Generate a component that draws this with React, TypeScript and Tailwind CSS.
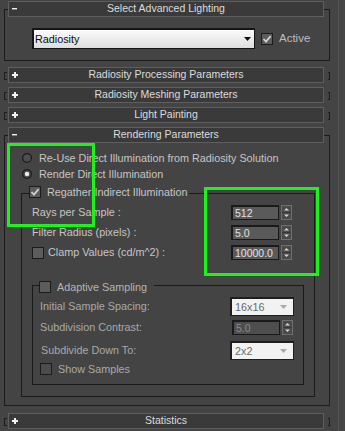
import React from 'react';

const Header = ({ title, open }: { title: string; open?: boolean }) => (
  <div className="relative h-[16px] w-[316px] ml-[3px] bg-[#3a3a3a] border border-[#5e5e5e] flex items-center justify-center text-[10.5px] text-[#dcdcdc]">
    <span className="absolute left-[3px] top-0 h-full flex items-center">
      {open ? (
        <svg width="5" height="2"><rect x="0" y="0" width="5" height="1.4" fill="#f0f0f0" /></svg>
      ) : (
        <svg width="6" height="6"><rect x="0" y="2" width="6" height="2" fill="#f4f4f4" /><rect x="2" y="0" width="2" height="6" fill="#f4f4f4" /></svg>
      )}
    </span>
    <span className="leading-none -mt-[1px]">{title}</span>
  </div>
);

const Collapsed = ({ title, className = '' }: { title: string; className?: string }) => (
  <div className={`flex h-[16px] ${className}`}>
    <div className="w-[3px] h-[8px] mt-[5px] border-l border-y border-[#1c1c1c]" />
    <div className="-ml-[2px]">
      <Header title={title} />
    </div>
    <div className="w-[2px] h-[8px] mt-[5px] ml-[4px] border-r border-y border-[#1c1c1c]" />
  </div>
);

const Check = ({ checked, dim }: { checked?: boolean; dim?: boolean }) => (
  <div className={`w-[12px] h-[12px] shrink-0 border border-[#1c1c1c] ${dim ? 'bg-[#4c4c4c]' : 'bg-[#5c5c5c]'} flex items-center justify-center`}>
    {checked && (
      <svg width="10" height="10" viewBox="0 0 10 10">
        <path d="M1.5 5 L4 7.6 L8.6 2.2" stroke="#cfcfcf" strokeWidth="1.8" fill="none" />
      </svg>
    )}
  </div>
);

const Radio = ({ on }: { on?: boolean }) => (
  <svg width="10" height="10" viewBox="0 0 10 10" className="shrink-0">
    <circle cx="5" cy="5" r="4.4" fill="#4d4d4d" stroke="#1a1a1a" strokeWidth="1.2" />
    {on && <circle cx="5" cy="5" r="2.2" fill="#ececec" />}
  </svg>
);

const SpinBtn = () => (
  <svg width="11" height="15" viewBox="0 0 11 15" className="shrink-0">
    <rect x="0.5" y="0.5" width="10" height="14" fill="#4a4a4a" stroke="#707070" />
    <line x1="1" y1="7.5" x2="10" y2="7.5" stroke="#383838" />
    <path d="M3 5.5 L5.5 3 L8 5.5 Z" fill="#d6d6d6" />
    <path d="M3 9.5 L5.5 12 L8 9.5 Z" fill="#d6d6d6" />
  </svg>
);

const Spinner = ({ value, dim }: { value: string; dim?: boolean }) => (
  <div className="flex items-center gap-[2px] shrink-0">
    <div className={`w-[48px] h-[15px] shrink-0 overflow-hidden border-l-2 border-t-2 border-r border-b border-[#1a1a1a] ${dim ? 'bg-[#4e4e4e] text-[#8c8c8c]' : 'bg-[#5a5a5a] text-[#e2e2e2]'} pl-[2px] flex items-center text-[10.5px] leading-none whitespace-nowrap`}>
      {value}
    </div>
    <SpinBtn />
  </div>
);

const Drop = ({ value }: { value: string }) => (
  <div className="w-[64px] h-[19px] shrink-0 bg-[#f2f2f2] border-l-2 border-t-2 border-r border-b border-[#1e1e1e] flex items-center justify-between pl-[3px] pr-[6px] text-[10.8px] text-[#6a6a6a] leading-none">
    <span>{value}</span>
    <svg width="7" height="4"><path d="M0 0 L7 0 L3.5 4 Z" fill="#a9a9a9" /></svg>
  </div>
);

export default function App() {
  return (
    <div className="relative w-[345px] h-[431px] overflow-hidden bg-[#444444] flex font-['Liberation_Sans',Arial,sans-serif] text-[10.8px] text-[#c6c6c6]">
      <div className="w-[338px] pl-[4px] pr-[8px] pt-[1px] flex flex-col">
        {/* Select Advanced Lighting */}
        <div className="pt-[8px]">
          <div className="border border-[#1c1c1c] flex flex-col">
            <div className="-mt-[9px]">
              <Header title="Select Advanced Lighting" open />
            </div>
            <div className="pt-[11px] pb-[11px] pl-[27px] flex items-center">
              <div className="w-[223px] h-[21px] border-l-2 border-t-2 border-r border-b border-[#151515] bg-gradient-to-b from-[#fbfbfb] to-[#dedede] flex items-center justify-between pl-[1px] pr-[3px] text-[#0c0c0c] leading-none">
                <span>Radiosity</span>
                <svg width="7" height="4"><path d="M0 0 L7 0 L3.5 4 Z" fill="#111" /></svg>
              </div>
              <div className="ml-[6px] flex items-center gap-[6px]">
                <Check checked />
                <span className="text-[11.5px] text-[#bdbdbd]">Active</span>
              </div>
            </div>
          </div>
        </div>

        <Collapsed title="Radiosity Processing Parameters" className="mt-[6px]" />
        <Collapsed title="Radiosity Meshing Parameters" className="mt-[4px]" />
        <Collapsed title="Light Painting" className="mt-[4px]" />

        {/* Rendering Parameters */}
        <div className="mt-[4px] pt-[8px]">
          <div className="border border-[#1c1c1c] flex flex-col pb-[8px]">
            <div className="-mt-[9px]">
              <Header title="Rendering Parameters" open />
            </div>
            <div className="mt-[7px] pl-[17px] h-[16px] flex items-center gap-[7px] whitespace-nowrap">
              <Radio />
              <span>Re-Use Direct Illumination from Radiosity Solution</span>
            </div>
            <div className="pl-[17px] h-[16px] flex items-center gap-[7px]">
              <Radio on />
              <span>Render Direct Illumination</span>
            </div>

            {/* Regather group */}
            <div className="mt-[11px] ml-[16px] mr-[14px] border border-[#1a1a1a] flex flex-col pb-[11px]">
              <div className="-mt-[8px] ml-[7px] self-start h-[12px] bg-[#444444] pr-[2px] flex items-center gap-[6px]">
                <Check checked />
                <span className="leading-none">Regather Indirect Illumination</span>
              </div>
              <div className="mt-[7px] pl-[10px] pr-[22px] h-[15px] flex items-center justify-between">
                <span>Rays per Sample :</span>
                <Spinner value="512" />
              </div>
              <div className="mt-[5px] pl-[10px] pr-[22px] h-[15px] flex items-center justify-between">
                <span>Filter Radius (pixels) :</span>
                <Spinner value="5.0" />
              </div>
              <div className="mt-[5px] pl-[10px] pr-[22px] h-[15px] flex items-center justify-between">
                <div className="flex items-center gap-[4px]">
                  <Check />
                  <span>Clamp Values (cd/m^2) :</span>
                </div>
                <Spinner value="10000.0" />
              </div>

              {/* Adaptive Sampling group */}
              <div className="mt-[25px] mx-[10px] border border-[#1a1a1a] flex flex-col pb-[9px] text-[#a9a9a9]">
                <div className="-mt-[5px] ml-[6px] self-start h-[12px] bg-[#444444] pr-[7px] flex items-center gap-[6px] text-[#b4b4b4]">
                  <Check />
                  <span className="leading-none">Adaptive Sampling</span>
                </div>
                <div className="mt-[4px] pl-[7px] pr-[9px] h-[19px] flex items-center justify-between">
                  <span>Initial Sample Spacing:</span>
                  <Drop value="16x16" />
                </div>
                <div className="mt-[4px] pl-[7px] pr-[10px] h-[15px] flex items-center justify-between">
                  <span>Subdivision Contrast:</span>
                  <Spinner value="5.0" dim />
                </div>
                <div className="mt-[6px] pl-[8px] pr-[9px] h-[19px] flex items-center justify-between">
                  <span>Subdivide Down To:</span>
                  <Drop value="2x2" />
                </div>
                <div className="mt-[3px] pl-[7px] h-[12px] flex items-center gap-[6px]">
                  <Check dim />
                  <span>Show Samples</span>
                </div>
              </div>
            </div>
          </div>
        </div>

        <Collapsed title="Statistics" className="mt-[7px]" />
      </div>
      <div className="flex-1 border-l border-[#525252] bg-[#464646]" />

      {/* annotation highlights */}
      <div className="absolute left-[7px] top-[143px] w-[88px] h-[84px] border-[3px] border-[#1ef21e] pointer-events-none" />
      <div className="absolute left-[204px] top-[187px] w-[115px] h-[89px] border-[3px] border-[#1ef21e] pointer-events-none" />
    </div>
  );
}
